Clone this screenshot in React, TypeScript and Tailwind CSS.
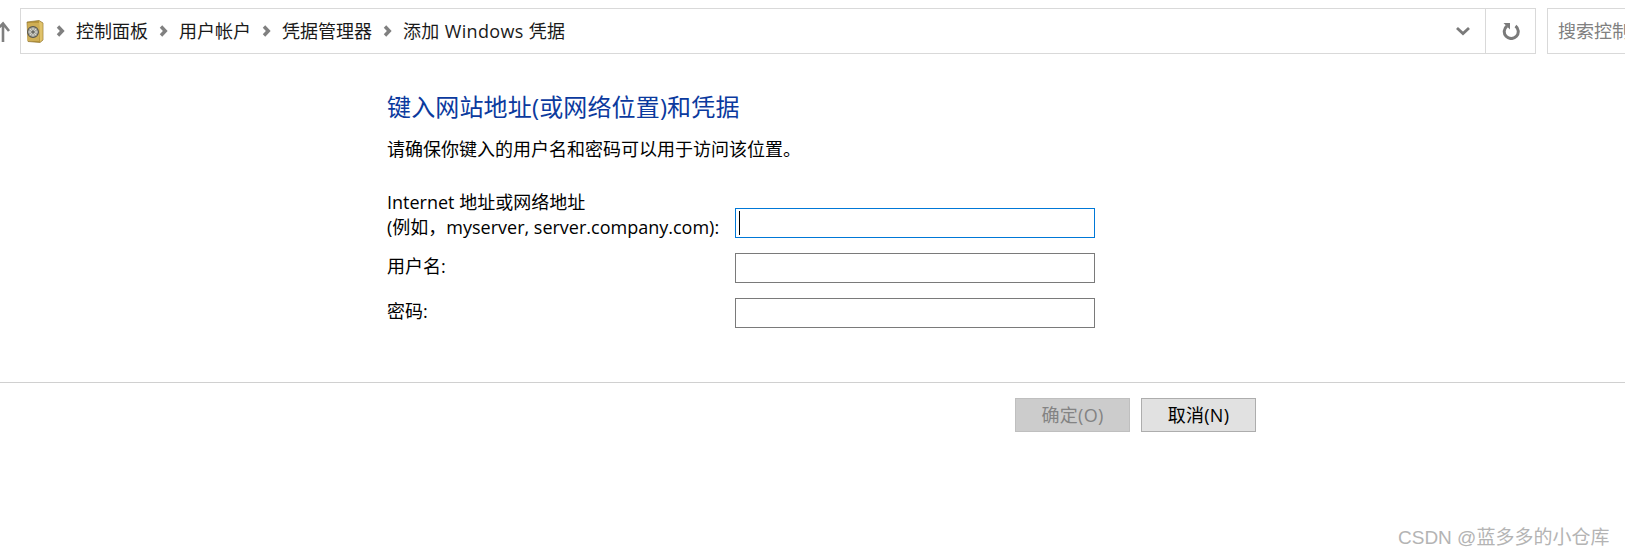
const FONT = "font-['Open_Sans','Noto_Sans_CJK_SC',sans-serif]";

function Chevron() {
  return (
    <svg width="9" height="12" viewBox="0 0 9 12" className="shrink-0">
      <path d="M2 1.5 L6.3 6 L2 10.5" fill="none" stroke="#808080" strokeWidth="3.4" />
    </svg>
  );
}

function SafeIcon() {
  return (
    <svg width="18" height="23" viewBox="0 0 18 23" className="shrink-0">
      <path d="M1 2 L13 0.5 L17 3 L17 20 L14 22.5 L2 21.5 Z" fill="#b8963c" stroke="#8f7430" strokeWidth="0.7" />
      <path d="M13 1 L16.6 3.2 L16.6 19.8 L14 22 Z" fill="#e0c26a" />
      <rect x="1.5" y="3" width="11.5" height="18" fill="#cfae55" />
      <circle cx="7" cy="12" r="5.4" fill="#a8a8a0" stroke="#55554f" strokeWidth="1.1" />
      <path d="M7 7.5 V16.5 M2.5 12 H11.5 M3.8 8.8 L10.2 15.2 M10.2 8.8 L3.8 15.2" stroke="#e8e8e0" strokeWidth="0.8" />
      <circle cx="7" cy="12" r="1.8" fill="#6a6a64" />
    </svg>
  );
}

export default function App() {
  return (
    <div className={`w-[1625px] h-[555px] relative overflow-hidden bg-white text-black ${FONT}`}>
      {/* address bar */}
      <div className="flex h-[46px] absolute top-2 left-0 right-0">
        <div className="w-5 shrink-0 overflow-hidden">
          <svg width="20" height="46" viewBox="0 0 20 46">
            <path d="M3 16 V34 M-5 23.5 L3 15.5 L9 23" fill="none" stroke="#7f7f7f" strokeWidth="2.6" />
          </svg>
        </div>
        <div className="w-[1516px] shrink-0 flex items-center border border-[#d9d9d9]">
          <div className="flex items-center flex-1 pl-[5px] gap-[11px] text-[18px] leading-none text-[#1a1a1a]">
            <SafeIcon />
            <div className="ml-px"><Chevron /></div>
            <span>控制面板</span>
            <Chevron />
            <span>用户帐户</span>
            <Chevron />
            <span>凭据管理器</span>
            <Chevron />
            <span className="tracking-[0.35px]">添加 Windows 凭据</span>
          </div>
          <svg width="16" height="10" viewBox="0 0 16 10" className="mr-[14px]">
            <path d="M2 2 L8 7.5 L14 2" fill="none" stroke="#7a7a7a" strokeWidth="2.8" />
          </svg>
          <div className="w-[50px] h-full flex items-center justify-center border-l border-[#d9d9d9]">
            <svg width="18" height="18" viewBox="0 0 18 18">
              <path d="M5 4 A7 7 0 1 0 13.5 4" fill="none" stroke="#7a7a7a" strokeWidth="3" />
              <path d="M1.5 1 H8 V7.5 Z" fill="#7a7a7a" />
            </svg>
          </div>
        </div>
        <div className="ml-[11px] w-[120px] shrink-0 flex items-center border border-[#d9d9d9] pl-[10px] text-[18px] text-[#808080] overflow-hidden whitespace-nowrap">
          搜索控制面板
        </div>
      </div>

      {/* form */}
      <div className="pt-[91px] pl-[387px]">
        <h1 className="text-[24px] leading-8 font-normal tracking-[0.15px] text-[#0b3a9e]">键入网站地址(或网络位置)和凭据</h1>
        <p className="mt-[14px] text-[18px] leading-6">请确保你键入的用户名和密码可以用于访问该位置。</p>

        <div className="mt-[29px] flex items-end">
          <div className="w-[348px] text-[18px] leading-[25px] -mb-[2px]">
            Internet 地址或网络地址
            <br />
            (例如，myserver, server.company.com):
          </div>
          <div className="w-[360px] h-[30px] flex items-center border border-[#0078d7] pl-[3px]">
            <div className="w-px h-6 bg-black" />
          </div>
        </div>
        <div className="mt-[15px] flex">
          <div className="w-[348px] pt-px text-[18px] leading-6">用户名:</div>
          <input className="w-[360px] h-[30px] border border-[#7a7a7a]" />
        </div>
        <div className="mt-[15px] flex">
          <div className="w-[348px] pt-px text-[18px] leading-6">密码:</div>
          <input className="w-[360px] h-[30px] border border-[#7a7a7a]" />
        </div>
      </div>

      <div className="mt-[54px] border-t border-[#d0d0d0]" />

      <div className="mt-[15px] pl-[1015px] flex gap-[11px] text-[18px]">
        <button className="w-[115px] h-[34px] bg-[#cccccc] border border-[#bfbfbf] text-[#838383] tracking-[0.3px]">确定(O)</button>
        <button className="w-[115px] h-[34px] bg-[#e1e1e1] border border-[#adadad] text-black tracking-[0.3px]">取消(N)</button>
      </div>

      {/* watermark */}
      <div className="absolute left-[1398px] top-[525px] text-[19px] leading-[26px] text-[#b4b4b4] whitespace-nowrap font-['Liberation_Sans','Noto_Sans_CJK_SC',sans-serif]">
        CSDN @蓝多多的小仓库
      </div>
    </div>
  );
}
